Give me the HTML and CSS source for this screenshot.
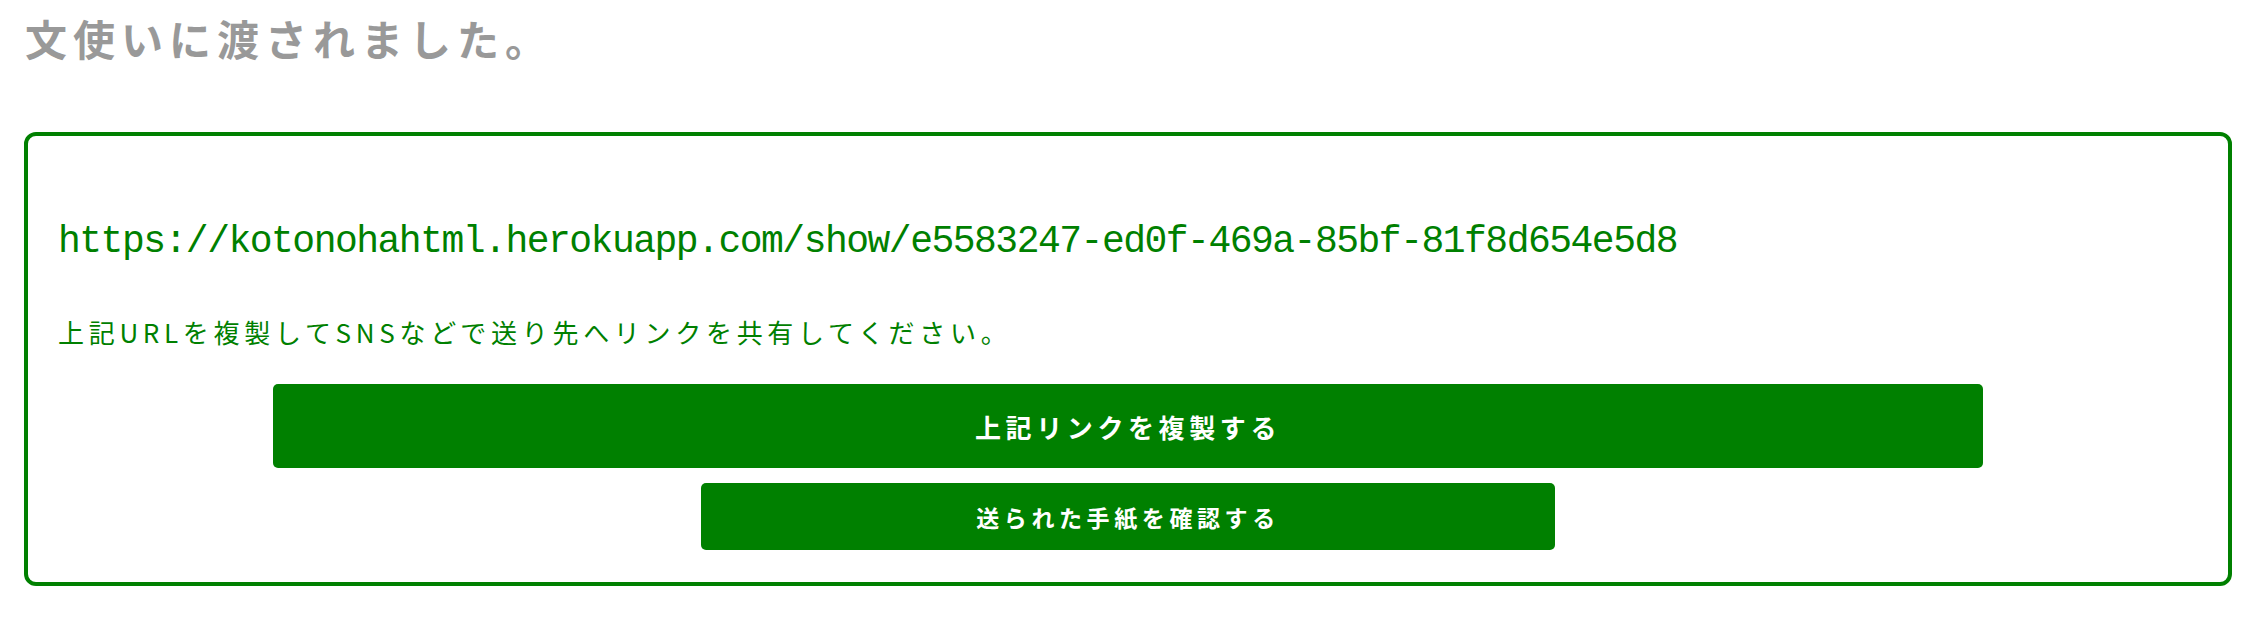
FILE: index.html
```html
<!DOCTYPE html>
<html lang="ja">
<head>
<meta charset="utf-8">
<title>文使いに渡されました。</title>
<link rel="stylesheet" href="styles.css">
</head>
<body>
<h1 class="title">文使いに渡されました。</h1>
<div class="card">
  <p class="url">https://kotonohahtml.herokuapp.com/show/e5583247-ed0f-469a-85bf-81f8d654e5d8</p>
  <p class="note">上記URLを複製してSNSなどで送り先へリンクを共有してください。</p>
  <div class="actions">
    <button class="btn btn-copy" type="button">上記リンクを複製する</button>
    <button class="btn btn-check" type="button">送られた手紙を確認する</button>
  </div>
</div>
</body>
</html>
```

FILE: styles.css
```css
html, body {
  margin: 0;
  padding: 0;
  background: #ffffff;
}
body {
  padding-top: 14px;
  font-family: "Noto Sans CJK JP", "Noto Sans", sans-serif;
}
.title {
  margin: 0 0 0 25px;
  font-size: 42px;
  line-height: 48px;
  font-weight: 700;
  letter-spacing: 6px;
  color: #999999;
}
.card {
  margin: 70px 24px 0 24px;
  border: 4px solid #008000;
  border-radius: 12px;
  padding: 84px 30px 32px 30px;
}
.url {
  margin: 0;
  font-family: "Liberation Mono", "DejaVu Sans Mono", monospace;
  font-size: 38px;
  line-height: 44px;
  letter-spacing: -1.5px;
  color: #008000;
  white-space: nowrap;
}
.note {
  margin: 50px 0 0 0;
  font-size: 26px;
  line-height: 36px;
  letter-spacing: 4.7px;
  color: #008000;
}
.actions {
  margin-top: 34px;
  display: flex;
  flex-direction: column;
  align-items: center;
  gap: 15px;
}
.btn {
  display: flex;
  align-items: center;
  justify-content: center;
  border: 0;
  border-radius: 5px;
  background: #008000;
  color: #ffffff;
  font-family: "Noto Sans CJK JP", "Noto Sans", sans-serif;
  font-weight: 700;
  padding: 0;
}
.btn-copy {
  width: 1710px;
  height: 84px;
  font-size: 26px;
  letter-spacing: 4.6px;
}
.btn-check {
  width: 854px;
  height: 67px;
  font-size: 23px;
  letter-spacing: 4.6px;
}
```
